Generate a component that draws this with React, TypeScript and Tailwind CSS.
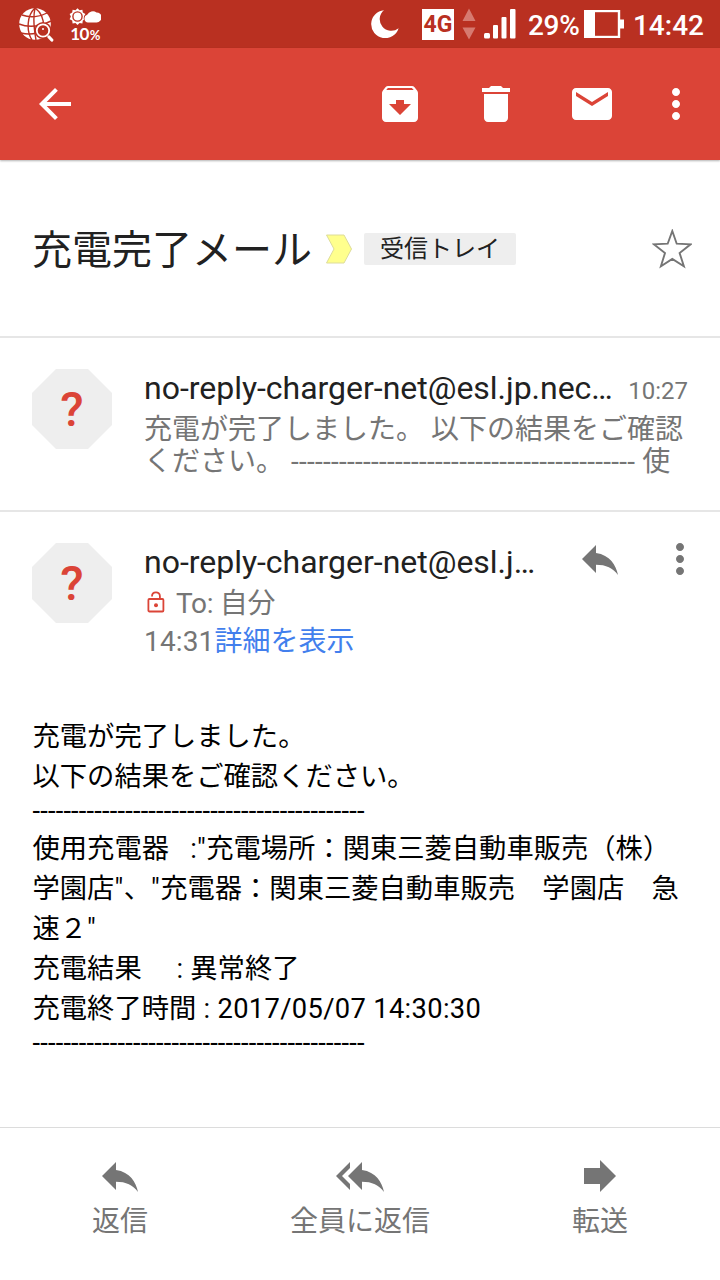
import type { ReactNode } from "react";
import clsx from "clsx";

const SENDER_SHORT = "no-reply-charger-net@esl.j…";
const SENDER_LONG = "no-reply-charger-net@esl.jp.nec…";
const DASHES = "-".repeat(43);

interface IconProps {
  d: string;
  className?: string;
}

const Icon = ({ d, className }: IconProps) => (
  <svg
    viewBox="0 0 24 24"
    fill="currentColor"
    className={clsx("size-12 shrink-0", className)}
  >
    <path d={d} />
  </svg>
);

const icons = {
  back: "M20 11H7.83l5.59-5.59L12 4l-8 8 8 8 1.41-1.41L7.83 13H20v-2z",
  archive:
    "M20.54 5.23l-1.39-1.68C18.88 3.21 18.47 3 18 3H6c-.47 0-.88.21-1.16.55L3.46 5.23C3.17 5.57 3 6.02 3 6.5V19c0 1.1.9 2 2 2h14c1.1 0 2-.9 2-2V6.5c0-.48-.17-.93-.46-1.27zM12 17.5L6.5 12H10v-2h4v2h3.5L12 17.5zM5.12 5l.81-1h12l.94 1H5.12z",
  trash:
    "M6 19c0 1.1.9 2 2 2h8c1.1 0 2-.9 2-2V7H6v12zM19 4h-3.5l-1-1h-5l-1 1H5v2h14V4z",
  mail: "M20 4H4c-1.1 0-2 .9-2 2v12c0 1.1.9 2 2 2h16c1.1 0 2-.9 2-2V6c0-1.1-.9-2-2-2zm0 4l-8 5-8-5V6l8 5 8-5v2z",
  more: "M12 8c1.1 0 2-.9 2-2s-.9-2-2-2-2 .9-2 2 .9 2 2 2zm0 2c-1.1 0-2 .9-2 2s.9 2 2 2 2-.9 2-2-.9-2-2-2zm0 6c-1.1 0-2 .9-2 2s.9 2 2 2 2-.9 2-2-.9-2-2-2z",
  reply: "M10 9V5l-7 7 7 7v-4.1c5 0 8.5 1.6 11 5.1-1-5-4-10-11-11z",
  replyAll:
    "M7 8V5l-7 7 7 7v-3l-4-4 4-4zm6 1V5l-7 7 7 7v-4.1c5 0 8.5 1.6 11 5.1-1-5-4-10-11-11z",
  forward: "M12 8V4l8 8-8 8v-4H4V8z",
};

const GlobeIcon = () => (
  <svg viewBox="0 0 36 36" className="mt-1 h-9 w-9" fill="none">
    <circle cx="17" cy="16" r="15.8" fill="#fff" />
    <g stroke="#b93021" strokeWidth="1.4">
      <path d="M17 0C9 7 8 23 14 32M17 0c7 5 10 14 8 26M17 0c-2 9-1 21 1 32" />
      <path d="M4 7c8 3 18 2 25-2M1 16c10 4 22 2 32-3M3 25c8 2 16 1 24-3" />
    </g>
    <circle cx="25" cy="22.5" r="8.6" fill="#b93021" />
    <circle cx="25" cy="22.5" r="6.2" stroke="#fff" strokeWidth="1.8" />
    <path d="M31 29l2.8 3" stroke="#fff" strokeWidth="3.2" strokeLinecap="round" />
    <circle cx="25" cy="21" r="1" fill="#fff" />
  </svg>
);

const WeatherIcon = () => (
  <svg viewBox="0 0 32 17" className="h-[17px] w-8" fill="#fff">
    <path d="M8.5.2l2 2 2.9-.5.4 2.9 2.6 1.4-1.3 2.6 1.3 2.6-2.6 1.4-.4 2.9-2.9-.5-2 2-2-2-2.9.5-.4-2.9-2.6-1.4 1.3-2.6L.6 6l2.6-1.4.4-2.9 2.9.5z" />
    <circle cx="8.5" cy="8.5" r="4.6" stroke="#b93021" strokeWidth="1.4" />
    <path
      d="M19 14.4a3.9 3.9 0 0 1-.8-7.600A6.500 6.500 0 0 1 27.500 4.400a5 5 0 0 1 .2 10z"
      stroke="#b93021"
      strokeWidth="1.5"
      paintOrder="stroke"
    />
  </svg>
);

const StatusBar = () => (
  <div className="flex h-12 items-center bg-[#b93021] pl-[18px] pr-4 text-white">
    <GlobeIcon />
    <div className="ml-[15px] mt-0.5 flex w-8 flex-col items-center">
      <WeatherIcon />
      <div className="flex h-[17px] items-baseline font-['Lato'] text-[17px] font-bold leading-[18px] tracking-[-0.7px]">
        10<span className="ml-px text-[13px]">%</span>
      </div>
    </div>
    <svg viewBox="0 0 28 28" className="ml-auto h-7 w-7" fill="#fff">
      <path d="M13 .2A14 14 0 1 0 27.6 18.2 11.5 11.5 0 0 1 13 .2z" />
    </svg>
    <div className="ml-[23px] flex h-[31px] w-8 items-center justify-center bg-white pt-0.5 text-[23px] font-bold text-[#b93021]">
      4G
    </div>
    <svg viewBox="0 0 14 32" className="ml-2 h-8 w-3.5" fill="#d67a70">
      <path d="M7 .5L13.5 13H.5zM7 31.5L.5 19.5h13z" />
    </svg>
    <svg viewBox="0 0 32 30" className="ml-2 h-[30px] w-8" fill="#fff">
      <rect x="0" y="24" width="6" height="5.5" rx="1.5" />
      <rect x="9" y="16" width="5" height="13.5" rx="1" />
      <rect x="17.5" y="8" width="5" height="21.5" rx="1" />
      <rect x="26" y="0" width="5.5" height="29.5" rx="1" />
    </svg>
    <div className="ml-3 mt-[3px] w-[52px] text-[28px] font-medium leading-none tracking-[-0.3px]">
      29%
    </div>
    <svg viewBox="0 0 41 28" className="ml-1 h-7 w-[41px]" fill="none">
      <rect x="1" y="1" width="34" height="26" stroke="#fff" strokeWidth="2.4" />
      <path d="M1 1h10v26H1zM36 9.5h4v9h-4z" fill="#fff" />
    </svg>
    <div className="ml-2 mt-[3px] text-[28px] font-medium leading-none">
      14:42
    </div>
  </div>
);

const Toolbar = () => (
  <div className="flex h-28 items-center bg-[#db4437] pl-[31px] pr-5 text-white shadow-[0_1px_2px_rgba(0,0,0,0.3)]">
    <Icon d={icons.back} />
    <div className="ml-auto flex items-center gap-12">
      <Icon d={icons.archive} />
      <Icon d={icons.trash} />
      <Icon d={icons.mail} />
      <Icon d={icons.more} className="-ml-3" />
    </div>
  </div>
);

const Subject = () => (
  <div className="flex h-[178px] items-center border-b-2 border-[#e6e6e6] pl-8 pr-7 pt-0.5">
    <h1 className="pt-[3px] text-[40px] leading-[48px] text-[#212121]">
      充電完了メール
    </h1>
    <svg viewBox="0 0 28 30" className="ml-[13px] h-[30px] w-7">
      <path
        d="M1.5 1H19l7.5 14L19 29H1.5L9 15z"
        fill="#ffff8d"
        stroke="#dddc9a"
        strokeWidth="1"
      />
    </svg>
    <span className="ml-[11px] h-8 w-[152px] rounded-[2px] bg-[#eee] pl-4 text-2xl leading-8 text-[#212121]">
      受信トレイ
    </span>
    <svg viewBox="0 0 40 40" className="ml-auto h-10 w-10" fill="none">
      <path
        d="M20.3 2l4.4 12.7 13.9.6-11 8.7 4.3 13.3-11.6-7.3L8.900 37.300 13 24 1.8 15.300l13.900-.6z"
        stroke="#757575"
        strokeWidth="1.9"
      />
    </svg>
  </div>
);

const Avatar = () => (
  <div className="flex size-20 shrink-0 items-center justify-center bg-[#eee] pt-0.5 text-5xl font-medium text-[#db4437] [clip-path:polygon(30%_0,70%_0,100%_30%,100%_70%,70%_100%,30%_100%,0_70%,0_30%)]">
    ?
  </div>
);

const CollapsedMessage = () => (
  <div className="flex h-[174px] border-b-2 border-[#e6e6e6] px-8 pt-[31px]">
    <Avatar />
    <div className="ml-8 flex-1">
      <div className="flex h-[45px] items-baseline justify-between leading-[39px]">
        <span className="text-[32px] tracking-[-0.02px] text-[#212121]">
          {SENDER_LONG}
        </span>
        <span className="text-2xl text-[#757575]">10:27</span>
      </div>
      <div className="whitespace-nowrap text-[28px] leading-8 text-[#757575]">
        <p>充電が完了しました。 以下の結果をご確認</p>
        <p>
          ください。 <span className="tracking-[0.27px]">{DASHES}</span> 使
        </p>
      </div>
    </div>
  </div>
);

const LockOpen = () => (
  <svg
    viewBox="0 0 18 22"
    className="-mt-1 ml-[3px] h-[22px] w-[18px]"
    fill="none"
    stroke="#db4437"
    strokeWidth="1.8"
  >
    <rect x="1.4" y="8" width="15" height="12.5" rx="1" />
    <path d="M5 5.500C5 .2 12.900.2 12.900 5v3" />
    <circle cx="9" cy="14.2" r="2" fill="#db4437" stroke="none" />
  </svg>
);

const ExpandedHeader = () => (
  <div className="flex h-[205px] pl-8 pr-4 pt-[31px]">
    <Avatar />
    <div className="ml-8 flex-1 text-[28px] leading-[38px] text-[#757575]">
      <p className="h-[42px] text-[32px] leading-[39px] tracking-[-0.02px] text-[#212121]">
        {SENDER_SHORT}
      </p>
      <div className="flex items-center">
        <LockOpen />
        <span className="ml-[11px] tracking-[-0.3px]">To: 自分</span>
      </div>
      <p>
        <span className="tracking-[0.15px]">14:31</span>
        <span className="text-[#427fed]">詳細を表示</span>
      </p>
    </div>
    <div className="-mt-2 flex gap-8 text-[#757575]">
      <Icon d={icons.reply} />
      <Icon d={icons.more} />
    </div>
  </div>
);

const Line = ({ children }: { children: ReactNode }) => (
  <p className="h-10 whitespace-pre leading-10">{children}</p>
);

const Divider = () => (
  <p className="h-8 whitespace-pre leading-7 tracking-[0.18px]">{DASHES}</p>
);

const Body = () => (
  <div className="flex-1 pl-[32.5px] text-[27.3px] text-black">
    <Line>充電が完了しました。</Line>
    <Line>以下の結果をご確認ください。</Line>
    <Divider />
    <Line>
      使用充電器<span className="tracking-[0.3px]">{'   :"'}</span>
      充電場所：関東三菱自動車販売（株）
    </Line>
    <Line>
      学園店<span className="tracking-[0.5px]">{'"'}</span>、
      <span className="tracking-[0.5px]">{'"'}</span>
      充電器：関東三菱自動車販売　学園店　急
    </Line>
    <Line>{'速２"'}</Line>
    <Line>
      充電結果<span className="tracking-[0.2px]">{"     : "}</span>異常終了
    </Line>
    <Line>
      充電終了時間
      <span className="tracking-[0.34px]">{" : 2017/05/07 14:30:30"}</span>
    </Line>
    <Divider />
  </div>
);

const actions = [
  { label: "返信", icon: icons.reply },
  { label: "全員に返信", icon: icons.replyAll },
  { label: "転送", icon: icons.forward },
];

const Footer = () => (
  <div className="grid h-[153px] grid-cols-3 border-t border-[#dcdcdc] pt-6 text-[#757575]">
    {actions.map((each) => (
      <div key={each.label} className="flex flex-col items-center">
        <Icon d={each.icon} />
        <span className="text-[28px] leading-[43px]">{each.label}</span>
      </div>
    ))}
  </div>
);

export default function App() {
  return (
    <div
      lang="ja"
      className="flex h-[1280px] w-[720px] flex-col overflow-hidden bg-white font-['Roboto','Noto_Sans_CJK_JP',sans-serif]"
    >
      <StatusBar />
      <Toolbar />
      <Subject />
      <CollapsedMessage />
      <ExpandedHeader />
      <Body />
      <Footer />
    </div>
  );
}
